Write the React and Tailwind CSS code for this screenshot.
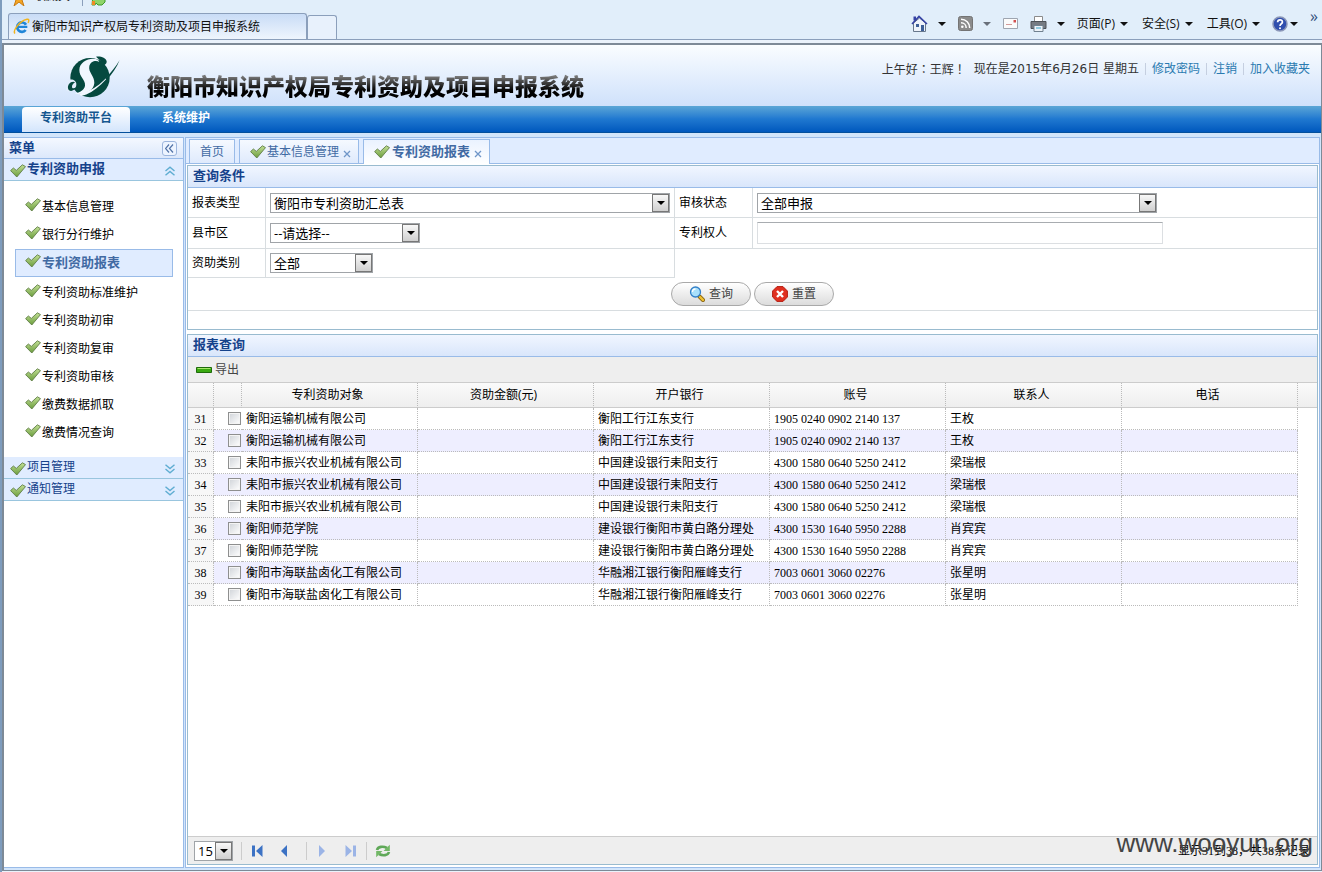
import clsx from 'clsx';

const sideItems = [
  '基本信息管理',
  '银行分行维护',
  '专利资助报表',
  '专利资助标准维护',
  '专利资助初审',
  '专利资助复审',
  '专利资助审核',
  '缴费数据抓取',
  '缴费情况查询',
];

const columns = ['专利资助对象', '资助金额(元)', '开户银行', '账号', '联系人', '电话'];

const rows = [
  [31, '衡阳运输机械有限公司', '', '衡阳工行江东支行', '1905 0240 0902 2140 137', '王枚', ''],
  [32, '衡阳运输机械有限公司', '', '衡阳工行江东支行', '1905 0240 0902 2140 137', '王枚', ''],
  [33, '耒阳市振兴农业机械有限公司', '', '中国建设银行耒阳支行', '4300 1580 0640 5250 2412', '梁瑞根', ''],
  [34, '耒阳市振兴农业机械有限公司', '', '中国建设银行耒阳支行', '4300 1580 0640 5250 2412', '梁瑞根', ''],
  [35, '耒阳市振兴农业机械有限公司', '', '中国建设银行耒阳支行', '4300 1580 0640 5250 2412', '梁瑞根', ''],
  [36, '衡阳师范学院', '', '建设银行衡阳市黄白路分理处', '4300 1530 1640 5950 2288', '肖宾宾', ''],
  [37, '衡阳师范学院', '', '建设银行衡阳市黄白路分理处', '4300 1530 1640 5950 2288', '肖宾宾', ''],
  [38, '衡阳市海联盐卤化工有限公司', '', '华融湘江银行衡阳雁峰支行', '7003 0601 3060 02276', '张星明', ''],
  [39, '衡阳市海联盐卤化工有限公司', '', '华融湘江银行衡阳雁峰支行', '7003 0601 3060 02276', '张星明', ''],
];

function Check() {
  return (
    <svg width="16" height="14" viewBox="0 0 16 14" className="shrink-0">
      <defs>
        <linearGradient id="check" x1="0" y1="0" x2="0" y2="1">
          <stop offset="0" stopColor="#c3e096" />
          <stop offset="1" stopColor="#6a9c3c" />
        </linearGradient>
      </defs>
      <path d="M.6 6.600 3.400 4 6.300 6.400 12.400.8 15.500 2.600 6.800 13z" fill="url(#check)" stroke="#5f7d45" strokeWidth=".9" strokeLinejoin="round" />
    </svg>
  );
}

function Caret({ className }) {
  return (
    <svg width="8" height="4" viewBox="0 0 8 4" className={clsx('shrink-0', className)}>
      <path d="M0 0h8L4 4z" fill="currentColor" />
    </svg>
  );
}

function Chevrons({ up }) {
  return (
    <svg width="10" height="10" viewBox="0 0 10 10" className={clsx('shrink-0', up && 'rotate-180')}>
      <path d="M.5.8 5 4.6 9.5.8M.5 5 5 8.8 9.5 5" fill="none" stroke="#5fadd2" strokeWidth="1.4" />
    </svg>
  );
}

function Close() {
  return (
    <svg width="8" height="8" viewBox="0 0 8 8">
      <path d="m1 1 6 6M7 1 1 7" stroke="#6f96c8" strokeWidth="1.3" />
    </svg>
  );
}

function Logo() {
  return (
    <svg width="66" height="52" viewBox="0 0 198 156" className="shrink-0">
      <circle cx="90" cy="83" r="59" fill="#05493f" />
      <path d="M108 20c14-2 30 3 32 14 1 9-8 14-22 17l8-14z" fill="#05493f" />
      {/* white S band */}
      <path d="M114 29C92 20 58 34 58 60c0 22 19 29 17 47-2 12-14 20-32 24 32 4 58-8 60-32 1-22-19-31-15-51 3-13 19-19 30-12z" fill="#f1f7ff" />
      <path d="M109 27c11 3 13 10 6 22 12-2 19-7 20-14z" fill="#05493f" />
      {/* lower left curl */}
      <path d="M20 92c14-8 30-2 29 12-1 13-14 23-26 20-9-3-7-19 3-25z" fill="#e2edfc" />
      <path d="M46 97c-12-6-24 6-22 18 2 12 20 9 24-3-6 4-12 4-12-2 0-5 4-10 10-13z" fill="#05493f" />
      <path d="M54 131c45-5 84-38 122-96-32 55-72 93-112 103z" fill="#f1f7ff" />
      <path d="M136 84c17-15 31-34 43-54-9 23-22 42-40 60z" fill="#05493f" />
    </svg>
  );
}

function Combo({ id, label, value, options, width }) {
  return (
    <div className={clsx('relative max-w-full', width)}>
      <select id={id} aria-label={label} defaultValue={value} className="block h-5 w-full appearance-none border border-[#a0a4a8] bg-white pr-4 pl-[3px] text-[13px] leading-[18px] text-black">
        {(options || [value]).map((o) => (
          <option key={o}>{o}</option>
        ))}
      </select>
      <span className="pointer-events-none absolute inset-y-px right-px flex w-[17px] items-center justify-center border border-[#777] bg-linear-to-b from-[#f8f8f8] to-[#cfcfcf]">
        <Caret className="text-black" />
      </span>
    </div>
  );
}

function PanelTitle({ children }) {
  return (
    <h2 className="h-[22px] border-b border-[#99bbe8] bg-linear-to-b from-[#f1f6ff] to-[#d9e6fb] pl-[5px] text-[13px] leading-[18px] font-bold text-[#15428b]">
      {children}
    </h2>
  );
}

function BrowserBar() {
  return (
    <div className="flex h-10 justify-between border-b border-[#8b9fbb] bg-[#e1eefa] text-[#111]">
      <div className="flex min-w-0 flex-col justify-between pl-[6px]">
        <div className="flex h-[6px] items-end gap-2 overflow-hidden pl-1">
          <svg width="14" height="14" viewBox="0 0 14 14" className="shrink-0">
            <path d="m7 0 2 5h5l-4 3 2 6-5-4-5 4 2-6-4-3h5z" fill="#f5a623" stroke="#c87a10" />
          </svg>
          <span className="h-[18px] shrink-0 text-xs leading-4">收藏夹</span>
          <span className="ml-1 h-full w-px shrink-0 bg-[#8b9fbb]" />
          <svg width="16" height="12" viewBox="0 0 16 12" className="shrink-0">
            <path d="M2 1h12v7l-3 3H7L5 9l-1 2H1z" fill="#8fd46a" stroke="#3f9a2a" />
            <path d="M1 7h3v4H1z" fill="#f08a24" />
          </svg>
        </div>
        <div className="flex items-end">
          <div className="flex h-[26px] w-[299px] items-center gap-[2px] rounded-t-[3px] border border-b-0 border-[#8b9fbb] bg-linear-to-b from-[#c9dcf6] to-[#eef5fd] pl-1">
            <svg width="17" height="17" viewBox="0 0 17 17" className="shrink-0">
              <path d="M13 6.8A4.7 4.7 0 1 0 12.6 12" fill="none" stroke="#1f86d8" strokeWidth="2.8" />
              <path d="M4.5 8.9h9.8" stroke="#1f86d8" strokeWidth="2.2" />
              <path d="M2 15.5C-.5 13 6 3 14 1.2c2.4-.4 2 2 1 3.6" fill="none" stroke="#f2b41c" strokeWidth="1.5" />
            </svg>
            <span className="truncate text-xs">衡阳市知识产权局专利资助及项目申报系统</span>
          </div>
          <div className="h-6 w-[30px] rounded-t-[3px] border border-b-0 border-[#8b9fbb] bg-[#e8f1fc]" />
        </div>
      </div>

      <div className="flex shrink-0 items-center gap-3 pt-2 pr-1 text-xs">
        <button aria-label="主页" className="flex items-center gap-[10px]">
          <svg width="17" height="17" viewBox="0 0 17 17">
            <path d="M2.500 8 8.500 3l6 5v8.500h-12z" fill="#eef3fb" stroke="#68788c" />
            <path d="M1 9 8 1.5 16 9" fill="none" stroke="#3542a5" strokeWidth="1.600" />
            <path d="M2.500 1.500h2.500v4H2.500z" fill="#3542a5" />
            <path d="M5 9h3v3H5zM10 10h3v6h-3z" fill="#3d5f98" />
          </svg>
          <Caret />
        </button>
        <button aria-label="源" className="flex items-center gap-[10px]">
          <svg width="15" height="15" viewBox="0 0 15 15">
            <rect x=".5" y=".5" width="14" height="14" rx="2" fill="#8b8b8b" stroke="#747474" />
            <path d="M3 3.3c5 0 8.7 3.7 8.7 8.7M3 6.8c3 0 5.2 2.2 5.2 5.2" fill="none" stroke="#fff" strokeWidth="1.5" />
            <circle cx="4.3" cy="10.8" r="1.3" fill="#fff" />
          </svg>
          <Caret className="text-[#69707a]" />
        </button>
        <button aria-label="邮件">
          <svg width="15" height="11" viewBox="0 0 15 11">
            <path d="M.5.5h14v10H.5z" fill="#fbfbfb" stroke="#9ea5b0" />
            <path d="M10.500 2h2.500v2.500h-2.500z" fill="#d25050" />
            <path d="M3 6.500h6" stroke="#d29a9a" />
          </svg>
        </button>
        <button aria-label="打印" className="flex items-center gap-[10px]">
          <svg width="17" height="16" viewBox="0 0 17 16">
            <path d="M4.500.5h8v6h-8z" fill="#fff" stroke="#8b8b8b" />
            <path d="M1 5.500h15v7H1z" fill="#767b82" stroke="#4c5157" />
            <path d="M4 9.500h9v6H4z" fill="#eef3f8" stroke="#71818f" />
            <path d="M6 12h5" stroke="#36a3c9" />
          </svg>
          <Caret />
        </button>
        <div className="flex items-center gap-[14px]">
          <button className="flex items-center gap-[5px]">页面(P)<Caret /></button>
          <button className="flex items-center gap-[5px]">安全(S)<Caret /></button>
          <button className="flex items-center gap-[5px]">工具(O)<Caret /></button>
        </div>
        <button aria-label="帮助" className="flex items-center gap-[2px]">
          <svg width="16" height="16" viewBox="0 0 16 16">
            <circle cx="8" cy="8" r="7" fill="#304fae" stroke="#8b97b8" strokeWidth="1.500" />
            <path d="M5.6 6.3c0-3.4 5-3.2 4.8-.2C10.3 7.8 8 7.8 8 10" fill="none" stroke="#fff" strokeWidth="1.7" />
            <circle cx="8" cy="12.2" r="1" fill="#fff" />
          </svg>
          <Caret />
        </button>
        <span className="self-start text-base leading-4 text-[#33517d]">»</span>
      </div>
    </div>
  );
}

function Header() {
  return (
    <header>
      <div className="flex h-[61px] justify-between bg-linear-to-b from-[#fafdff] to-[#cfe1fb] pl-14">
        <div className="flex items-center">
          <Logo />
          <h1 className="mt-5 ml-[21px] bg-linear-to-b from-[#777] from-20% to-black to-75% bg-clip-text text-[23px] leading-8 font-black whitespace-nowrap text-transparent">
            衡阳市知识产权局专利资助及项目申报系统
          </h1>
        </div>
        <div className="flex h-12 items-center pr-[11px] text-xs whitespace-nowrap text-[#333]">
          <span className="font-['Noto_Sans_CJK_TC',sans-serif]">上午好：王辉！</span>
          <span className="ml-2 font-['DejaVu_Sans','Noto_Sans_CJK_SC',sans-serif]">现在是2015年6月26日 星期五</span>
          <a href="#password" className="ml-[6px] border-l border-[#c5cfe0] pl-[6px] leading-3 text-[#2a7ab0]">修改密码</a>
          <a href="#logout" className="ml-[6px] border-l border-[#c5cfe0] pl-[6px] leading-3 text-[#2a7ab0]">注销</a>
          <a href="#favorite" className="ml-[6px] border-l border-[#c5cfe0] pl-[6px] leading-3 text-[#2a7ab0]">加入收藏夹</a>
        </div>
      </div>
      <nav className="flex h-[27px] items-end border-b border-[#04509c] bg-linear-to-b from-[#5ba6d6] via-[#1f78d0] to-[#0058bd] pl-[18px] text-xs font-bold">
        <a href="#platform" className="h-[25px] w-[108px] rounded-t-[4px] bg-linear-to-b from-white to-[#d3e5fc] text-center leading-[22px] text-[#15578f]">专利资助平台</a>
        <a href="#system" className="ml-8 h-[25px] leading-[22px] text-white">系统维护</a>
      </nav>
    </header>
  );
}

function Sidebar() {
  return (
    <aside className="w-[180px] shrink-0 border border-[#99bbe8] border-l-0 bg-white">
      <div className="flex h-[21px] items-center justify-between border-b border-[#99bbe8] bg-linear-to-b from-[#f4f8ff] to-[#dce8fb] pr-[6px] pl-[5px]">
        <h2 className="h-5 text-[13px] leading-[18px] font-bold text-[#15428b]">菜单</h2>
        <button aria-label="收起" className="flex h-[15px] w-[15px] items-center justify-center rounded-[3px] border border-[#9db6dd] bg-[#edf4ff]">
          <svg width="9" height="9" viewBox="0 0 9 9" className="-rotate-90">
            <path d="M.5 4 4.500.5 8.500 4M.5 8l4-3.500 4 3.500" fill="none" stroke="#5374a8" strokeWidth="1.200" />
          </svg>
        </button>
      </div>
      <button className="flex h-[22px] w-full items-start border-b border-[#99c5de] bg-[#e0ecff] pr-2 pl-[6px] text-left">
        <span className="pt-[5px]"><Check /></span>
        <span className="ml-px flex-1 text-[13px] leading-[18px] font-bold text-[#15428b]">专利资助申报</span>
        <span className="pt-[7px]"><Chevrons up /></span>
      </button>
      <ul className="pt-3 pr-[10px] pb-[10px] pl-[11px] text-xs">
        {sideItems.map((item, i) => (
          <li key={item}>
            <a
              href={'#' + i}
              className={clsx(
                'flex h-7 items-center gap-px border pl-[9px]',
                i === 2 ? 'mb-[2px] border-[#99bbe8] bg-[#e0ecff] text-[13px] font-bold text-[#416aa3]' : 'border-transparent text-black'
              )}
            >
              <span className="pb-1"><Check /></span>
              {item}
            </a>
          </li>
        ))}
      </ul>
      {['项目管理', '通知管理'].map((name) => (
        <button key={name} className="flex h-[22px] w-full items-start border-b border-[#99c5de] bg-[#e0ecff] pr-2 pl-[6px] text-left">
          <span className="pt-[5px]"><Check /></span>
          <span className="ml-px flex-1 text-xs leading-5 text-[#15428b]">{name}</span>
          <span className="pt-[7px]"><Chevrons /></span>
        </button>
      ))}
    </aside>
  );
}

function Tabs() {
  return (
    <div className="flex h-[26px] shrink-0 items-end gap-1 border-b border-[#99bbe8] bg-[#e0ecff] pl-[3px] text-[#416aa3]">
      <button className="h-6 border border-b-0 border-[#99bbe8] bg-linear-to-b from-[#f5f9ff] to-[#dfeafc] px-[10px] text-xs">首页</button>
      <div className="flex h-6 items-center gap-1 border border-b-0 border-[#99bbe8] bg-linear-to-b from-[#f5f9ff] to-[#dfeafc] pr-[7px] pl-[10px] text-xs">
        <button className="flex items-center gap-px"><Check />基本信息管理</button>
        <button aria-label="关闭" className="pt-1 leading-4"><Close /></button>
      </div>
      <div className="-mb-px flex h-[25px] items-center gap-1 border border-b-0 border-[#99bbe8] bg-linear-to-b from-[#eaf2ff] to-white pr-[7px] pl-[10px] text-[13px] font-bold">
        <button className="flex items-center gap-[2px]"><Check />专利资助报表</button>
        <button aria-label="关闭" className="pt-1 leading-4"><Close /></button>
      </div>
    </div>
  );
}

function QueryForm() {
  return (
    <section className="shrink-0 border border-[#99bbcf] bg-white pb-[18px]">
      <PanelTitle>查询条件</PanelTitle>
      <form onSubmit={(e) => e.preventDefault()}>
        <div className="grid grid-cols-[78px_409px_78px_1fr] text-xs text-black">
          <label htmlFor="type" className="flex h-[30px] items-center border-r border-b border-[#d8dde0] pl-1">报表类型</label>
          <div className="flex items-center border-r border-b border-[#d8dde0] pl-1">
            <Combo id="type" label="报表类型" value="衡阳市专利资助汇总表" width="w-[400px]" />
          </div>
          <label htmlFor="state" className="flex items-center border-r border-b border-[#d8dde0] pl-1">审核状态</label>
          <div className="flex items-center border-b border-[#d8dde0] pl-1">
            <Combo id="state" label="审核状态" value="全部申报" width="w-[400px]" />
          </div>

          <label htmlFor="area" className="flex h-[31px] items-center border-r border-b border-[#d8dde0] pl-1">县市区</label>
          <div className="flex items-center border-r border-b border-[#d8dde0] pl-1">
            <Combo id="area" label="县市区" value="--请选择--" width="w-[150px]" />
          </div>
          <label htmlFor="owner" className="flex items-center border-r border-b border-[#d8dde0] pl-1">专利权人</label>
          <div className="flex items-center border-b border-[#d8dde0] pl-1">
            <input id="owner" type="text" className="h-[22px] w-[406px] max-w-full border border-[#dcdfe2] border-t-[#a8acb0] px-1 text-[13px]" />
          </div>

          <label htmlFor="kind" className="flex h-[29px] items-center border-r border-b border-[#d8dde0] pl-1">资助类别</label>
          <div className="flex items-center border-r border-b border-[#d8dde0] pl-1">
            <Combo id="kind" label="资助类别" value="全部" width="w-[103px]" />
          </div>
        </div>
        <div className="flex h-[33px] items-center justify-center gap-[3px] border-b border-[#d8dde0]">
          <button type="submit" className="flex h-6 w-20 items-center justify-center gap-1 rounded-full border border-[#a9a9a9] bg-linear-to-b from-white to-[#dcdcdc] text-xs text-[#444]">
            <svg width="16" height="16" viewBox="0 0 16 16">
              <path d="m10.500 10.500 3.500 3.500" stroke="#8a6614" strokeWidth="4" strokeLinecap="round" />
              <path d="m11 11 3 3" stroke="#f1c232" strokeWidth="2.400" strokeLinecap="round" />
              <circle cx="6.5" cy="6" r="5" fill="#a9e0fb" stroke="#3380c8" strokeWidth="1.3" />
              <path d="M3.5 6c0-2 1.2-3 3-3" fill="none" stroke="#fff" strokeWidth="1.3" />
            </svg>
            查询
          </button>
          <button type="reset" className="flex h-6 w-20 items-center justify-center gap-1 rounded-full border border-[#a9a9a9] bg-linear-to-b from-white to-[#dcdcdc] text-xs text-[#444]">
            <svg width="16" height="16" viewBox="0 0 16 16">
              <path d="M5 .6h6L15.4 5v6L11 15.4H5L.6 11V5z" fill="#e03020" stroke="#b51d10" />
              <path d="m5 5 6 6M11 5l-6 6" stroke="#fff" strokeWidth="2.4" />
            </svg>
            重置
          </button>
        </div>
      </form>
    </section>
  );
}

function Pager() {
  return (
    <div className="relative flex h-7 shrink-0 items-center border-t border-[#ccc] bg-[#eeeeee] pl-[6px]">
      <Combo id="size" label="每页条数" value="15" options={['15', '30', '50']} width="w-[39px]" />
      <span className="ml-2 h-[18px] w-px bg-[#ccc]" />
      <div className="flex items-center gap-[18px] pl-[10px]">
        <button aria-label="首页">
          <svg width="11" height="12" viewBox="0 0 11 12"><path d="M0 .5h3v11H0zM10.500 0v12L4 6z" fill="#3c72c4" /></svg>
        </button>
        <button aria-label="上一页">
          <svg width="6" height="12" viewBox="0 0 6 12"><path d="M6 0v12L0 6z" fill="#3c72c4" /></svg>
        </button>
      </div>
      <span className="ml-[19px] h-[18px] w-px bg-[#ccc]" />
      <div className="flex items-center gap-5 pl-3">
        <button aria-label="下一页">
          <svg width="6" height="12" viewBox="0 0 6 12"><path d="M0 0v12l6-6z" fill="#9bb4e6" /></svg>
        </button>
        <button aria-label="末页">
          <svg width="11" height="12" viewBox="0 0 11 12"><path d="M8 .5h3v11H8zM.5 0v12L7 6z" fill="#9bb4e6" /></svg>
        </button>
      </div>
      <span className="ml-[10px] h-[18px] w-px bg-[#ccc]" />
      <button aria-label="刷新" className="ml-2">
        <svg width="16" height="16" viewBox="0 0 16 16">
          <path d="M2 7C3 3.500 8 2.800 12 5" fill="none" stroke="#5fa858" strokeWidth="2.600" />
          <path d="M14.800 1.800V8H8.500z" fill="#72b866" />
          <path d="M14 9c-1 3.500-6 4.200-10 2" fill="none" stroke="#5fa858" strokeWidth="2.600" />
          <path d="M1.200 14.200V8h6.300z" fill="#72b866" />
        </svg>
      </button>
      <span className="ml-auto pr-[7px] font-['Liberation_Serif','Noto_Sans_CJK_SC',serif] text-xs text-black">显示31到38，共38条记录</span>
      <span className="absolute right-1 bottom-[7px] font-['Liberation_Sans',sans-serif] text-[26px] leading-7 text-[#444]">www.wooyun.org</span>
    </div>
  );
}

function Report() {
  return (
    <section className="mt-1 flex flex-1 flex-col border border-[#99bbcf] bg-white">
      <PanelTitle>报表查询</PanelTitle>
      <div className="flex h-[26px] shrink-0 items-center border-b border-[#ccc] bg-[#eeeeee] pl-2 text-xs text-[#444]">
        <button className="flex items-center gap-[3px]">
          <svg width="16" height="6" viewBox="0 0 16 6">
            <path d="M.5.5h15v5H.5z" fill="#39a910" stroke="#1e6b0b" />
            <path d="M1.500 1.500h13" stroke="#a7e86a" />
          </svg>
          导出
        </button>
      </div>
      <table className="w-full table-fixed border-separate border-spacing-0 text-xs text-black">
        <colgroup>
          <col className="w-[26px]" />
          <col className="w-7" />
          <col /><col /><col /><col /><col /><col />
          <col className="w-[19px]" />
        </colgroup>
        <thead>
          <tr className="h-[25px] bg-linear-to-b from-[#fafafa] to-[#eeeeee] [&>th]:border-b [&>th]:border-b-[#ccc]">
            <th className="border-r border-[#bbb] [border-right-style:dotted]" />
            <th className="border-r border-[#bbb] [border-right-style:dotted]" />
            {columns.map((c) => (
              <th key={c} className="border-r border-[#bbb] py-0 pr-1 pl-0 font-normal [border-right-style:dotted]">{c}</th>
            ))}
            <th />
          </tr>
        </thead>
        <tbody className="leading-5">
          {rows.map(([no, ...cells], i) => (
            <tr key={no} className="h-[22px]">
              <td className="border-r border-b border-dotted border-[#bbb] bg-[#f7f7f7] p-0 text-center font-['Liberation_Serif',serif]">{no}</td>
              <td className={clsx('border-b border-dotted border-[#bbb] p-0', i % 2 && 'bg-[#eeeeff]')}>
                <input type="checkbox" aria-label={'选择 ' + no} className="ml-[14px] block h-[13px] w-[13px] appearance-none border border-[#8e8f8f] bg-linear-to-br from-[#cfd3d8] to-white shadow-[inset_0_0_0_1px_#f4f4f4]" />
              </td>
              {cells.map((cell, j) => (
                <td
                  key={j}
                  className={clsx(
                    'truncate border-r border-b border-dotted border-[#bbb] py-0 pr-0 pl-1',
                    i % 2 && 'bg-[#eeeeff]',
                    j === 3 && "font-['Liberation_Serif',serif]"
                  )}
                >
                  {cell}
                </td>
              ))}
              <td className="p-0" />
            </tr>
          ))}
        </tbody>
      </table>
      <div className="flex-1" />
      <Pager />
    </section>
  );
}

export default function App() {
  return (
    <div className="flex min-h-screen flex-col border-l-2 border-[#7e9cbd] bg-[#eaf2fb] font-['Open_Sans','Noto_Sans_CJK_SC',sans-serif]">
      <BrowserBar />
      <div className="mt-[3px] mb-px flex flex-1 flex-col border-t-2 border-r border-b border-l-2 border-[#7d8a97] bg-[#d2e5fb]">
        <Header />
        <div className="flex flex-1 gap-px pt-1 pr-px pb-[2px]">
          <Sidebar />
          <main className="flex min-w-0 flex-1 flex-col border border-[#99bbe8] bg-white">
            <Tabs />
            <div className="flex flex-1 flex-col p-px pb-[2px]">
              <QueryForm />
              <Report />
            </div>
          </main>
        </div>
      </div>
    </div>
  );
}
